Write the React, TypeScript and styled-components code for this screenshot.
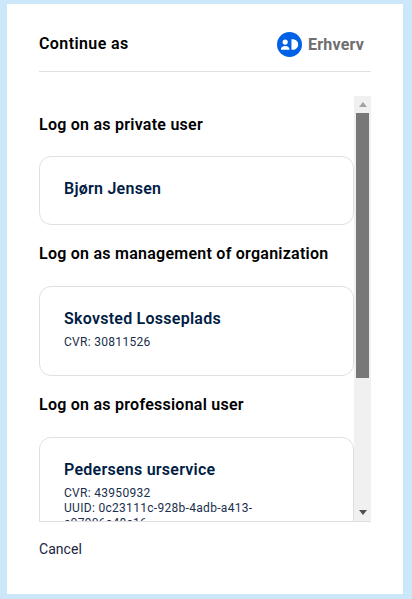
import React from 'react';
import styled, { createGlobalStyle } from 'styled-components';

const GlobalStyle = createGlobalStyle`
  html, body {
    margin: 0;
    height: 100%;
    overflow: hidden;
    background: #cce7fa;
    font-family: Roboto, "Noto Sans", sans-serif;
  }
`;

const Page = styled.div`
  height: 599px;
  padding: 4px 9px 5px 7px;
  box-sizing: border-box;
`;

const Dialog = styled.main`
  height: 100%;
  background: #fff;
  padding: 0 32px;
  display: flex;
  flex-direction: column;
`;

const Header = styled.header`
  height: 68px;
  padding-top: 20px;
  box-sizing: border-box;
  flex-shrink: 0;
  margin-bottom: 24px;
  border-bottom: 1px solid #e0e0e0;
  display: flex;
  justify-content: space-between;
  align-items: flex-start;
`;

const Title = styled.h1`
  margin: 0;
  font-size: 16px;
  line-height: 40px;
  font-weight: 600;
  letter-spacing: 0.4px;
  color: #000;
`;

const Brand = styled.div`
  display: flex;
  align-items: center;
  gap: 6px;
  height: 40px;
  padding-right: 7px;
`;

const BrandName = styled.span`
  font-size: 16px;
  font-weight: 700;
  letter-spacing: 0.2px;
  color: #6f6f6f;
`;

const Body = styled.div`
  height: 425px;
  flex-shrink: 0;
  display: flex;
  border-bottom: 1px solid #e0e0e0;
`;

const Scroller = styled.div`
  flex: 1;
  min-width: 0;
  overflow: hidden;
`;

const ScrollTrack = styled.div`
  width: 17px;
  flex-shrink: 0;
  background: #f0f0f0;
  display: flex;
  flex-direction: column;
  align-items: center;
`;

const ScrollArrow = styled.div<{ $down?: boolean }>`
  height: 17px;
  width: 17px;
  flex-shrink: 0;
  display: flex;
  align-items: center;
  justify-content: center;
  margin-top: ${(props) => (props.$down ? 'auto' : '0')};

  &::before {
    content: '';
    border-left: 4.5px solid transparent;
    border-right: 4.5px solid transparent;
    ${(props) =>
      props.$down ? 'border-top: 5px solid #505050;' : 'border-bottom: 5px solid #a3a3a3;'}
  }
`;

const ScrollThumb = styled.div`
  width: 13px;
  height: 265px;
  background: #787878;
`;

const Heading = styled.h2`
  margin: 17px 0 20px;
  font-size: 16px;
  line-height: 24px;
  font-weight: 600;
  letter-spacing: 0.25px;
  color: #000;

  &:first-child {
    margin: 17px 0 19px;
  }
`;

const Card = styled.button`
  display: block;
  width: 100%;
  box-sizing: border-box;
  padding: 19px 24px 22px;
  background: #fff;
  border: 1px solid #e0e0e0;
  border-radius: 12px;
  font-family: inherit;
  text-align: left;
`;

const Name = styled.div`
  font-size: 16px;
  line-height: 26px;
  font-weight: 600;
  letter-spacing: 0.25px;
  color: #001d44;
`;

const Meta = styled.div`
  margin: 3px 0 3px;
  font-size: 12px;
  line-height: 15px;
  letter-spacing: 0.3px;
  color: #1a2f4d;
`;

const Footer = styled.footer`
  padding-top: 17px;
`;

const CancelLink = styled.a`
  font-size: 14px;
  line-height: 20px;
  letter-spacing: 0.05px;
  text-decoration: none;
  color: #1a2440;
`;

const LogoMark = () => (
  <svg width="25" height="25" viewBox="0 0 26 26" aria-hidden="true">
    <circle cx="13" cy="13" r="13" fill="#0060e6" />
    <circle cx="8.500" cy="10.500" r="2.700" fill="#fff" />
    <path d="M4 18.500c0-2.600 1.800-3.900 4.500-3.900s4.500 1.300 4.500 3.900z" fill="#fff" />
    <path d="M15 7.500h1c3.600 0 6 2.200 6 5.500s-2.400 5.500-6 5.500h-1z" fill="#fff" />
  </svg>
);

export default function App() {
  return (
    <>
      <GlobalStyle />
      <Page>
        <Dialog>
          <Header>
            <Title>Continue as</Title>
            <Brand>
              <LogoMark />
              <BrandName>Erhverv</BrandName>
            </Brand>
          </Header>
          <Body>
            <Scroller>
              <Heading>Log on as private user</Heading>
              <Card>
                <Name>Bjørn Jensen</Name>
              </Card>
              <Heading>Log on as management of organization</Heading>
              <Card>
                <Name>Skovsted Losseplads</Name>
                <Meta>CVR: 30811526</Meta>
              </Card>
              <Heading>Log on as professional user</Heading>
              <Card>
                <Name>Pedersens urservice</Name>
                <Meta>
                  CVR: 43950932
                  <br />
                  UUID: 0c23111c-928b-4adb-a413-
                  <br />
                  c07906c48c16
                </Meta>
              </Card>
            </Scroller>
            <ScrollTrack>
              <ScrollArrow />
              <ScrollThumb />
              <ScrollArrow $down />
            </ScrollTrack>
          </Body>
          <Footer>
            <CancelLink href="#">Cancel</CancelLink>
          </Footer>
        </Dialog>
      </Page>
    </>
  );
}
